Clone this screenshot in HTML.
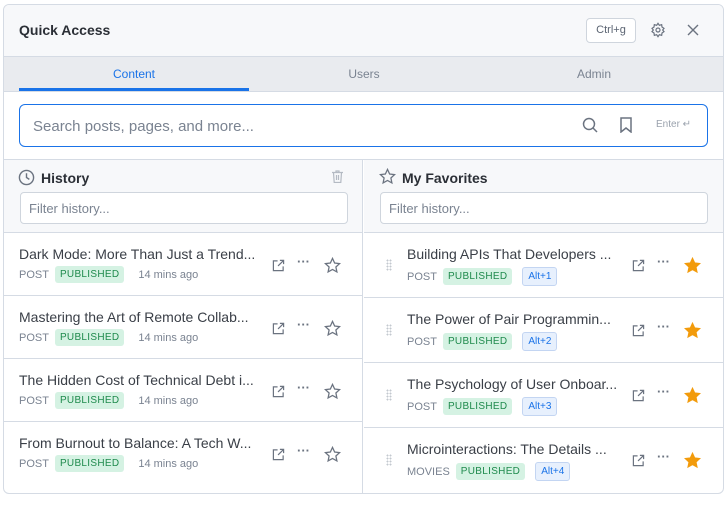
<!DOCTYPE html>
<html><head><style>
*{box-sizing:border-box;margin:0;padding:0}
body{width:726px;height:496px;background:#fff;font-family:"Liberation Sans",sans-serif;overflow:hidden;position:relative}
.panel{position:absolute;left:3px;top:4px;width:721px;height:490px;border:1px solid #d5dbe4;border-radius:6px;overflow:hidden;background:#fff}
.hdr{height:52px;background:#f7f8fa;border-bottom:1px solid #d5dbe4;position:relative}
.hdr .t{position:absolute;left:15px;top:17px;font-size:14px;font-weight:bold;color:#2b2f36}
.kbd{position:absolute;left:582px;top:13px;width:50px;height:25px;border:1px solid #cfd5dd;border-radius:4px;background:#fff;font-size:11px;color:#5b6472;text-align:center;line-height:23px}
.tabs{height:35px;background:#e9ebef;border-bottom:1px solid #d5dbe4;position:relative;font-size:12px}
.tab{position:absolute;top:10px;width:230px;text-align:center;color:#7a8391}
.ul{position:absolute;left:15px;top:31px;width:230px;height:3px;background:#1a73e8}
.sw{height:68px;border-bottom:1px solid #d5dbe4;position:relative}
.search{position:absolute;left:15px;top:12px;width:689px;height:43px;border:1px solid #1a73e8;border-radius:6px;font-size:15px;color:#7a8391;padding:13px 0 0 13px}
.col{position:absolute;top:155px;height:345px}
.ch{height:73px;background:#f7f8fa;border-bottom:1px solid #d5dbe4;position:relative}
.ch .h{position:absolute;left:37px;top:10px;font-size:14px;font-weight:bold;color:#2b2f36}
.filt{position:absolute;left:16px;top:32px;width:328px;height:32px;border:1px solid #cfd5dd;border-radius:4px;background:#fff;font-size:13px;color:#7a8391;padding:8px 0 0 8px}
.row{position:relative;border-bottom:1px solid #d5dbe4}
.ti{position:absolute;font-size:14px;color:#3a3f47;white-space:nowrap}
.meta{position:absolute;font-size:11px;color:#7a8391;display:flex;align-items:center;gap:6px}
.pub{background:#d5f2e3;color:#1e8a4c;font-size:10px;padding:3px 5px;border-radius:3px;letter-spacing:.3px}
.alt{background:#e7f0fd;border:1px solid #c3d5f2;color:#1a73e8;font-size:10px;padding:3px 5px;border-radius:3px;margin-left:4px}
.ic{position:absolute}
</style></head><body>
<div class="panel">
 <div class="hdr"><div class="t">Quick Access</div><div class="kbd">Ctrl+g</div>
  <svg class="ic" style="left:646px;top:17px" width="16" height="16" viewBox="0 0 24 24" fill="none" stroke="#6b7380" stroke-width="1.8"><circle cx="12" cy="12" r="3"/><path d="M12 2l2 3 3.5-1 .5 3.5 3 2-2 2.5 2 2.5-3 2-.5 3.5-3.5-1-2 3-2-3-3.5 1-.5-3.5-3-2 2-2.5-2-2.5 3-2L6.5 4 10 5z"/></svg>
  <svg class="ic" style="left:683px;top:19px" width="12" height="12" viewBox="0 0 12 12" stroke="#6b7380" stroke-width="1.4"><path d="M1 1l10 10M11 1L1 11"/></svg>
 </div>
 <div class="tabs"><div class="tab" style="left:15px;color:#1a73e8">Content</div><div class="tab" style="left:245px">Users</div><div class="tab" style="left:475px">Admin</div><div class="ul"></div></div>
 <div class="sw"><div class="search">Search posts, pages, and more...</div>
  <svg class="ic" style="left:578px;top:25px" width="16" height="16" viewBox="0 0 16 16" fill="none" stroke="#6b7380" stroke-width="1.5"><circle cx="7" cy="7" r="5.5"/><path d="M11 11l4 4"/></svg>
  <svg class="ic" style="left:616px;top:25px" width="12" height="16" viewBox="0 0 12 16" fill="none" stroke="#6b7380" stroke-width="1.5"><path d="M1 1h10v14l-5-4-5 4z"/></svg>
  <div style="position:absolute;left:652px;top:27px;font-size:10px;color:#9aa2ad">Enter ↵</div>
 </div>
</div>
<div class="col" style="left:4px;width:359px;top:160px;border-right:1px solid #d5dbe4;height:334px">
 <div class="ch">
  <svg class="ic" style="left:14px;top:9px" width="17" height="17" viewBox="0 0 18 18" fill="none" stroke="#6b7380" stroke-width="1.5"><circle cx="9" cy="9" r="7.5"/><path d="M9 4.5V9l3 2"/></svg>
  <div class="h">History</div>
  <svg class="ic" style="left:328px;top:10px" width="11" height="13" viewBox="0 0 11 13" fill="none" stroke="#b4bac3" stroke-width="1.2"><path d="M0 2.5h11M4 2.5V1h3v1.5M1.5 2.5l.7 10h6.6l.7-10M4.5 5v5M6.5 5v5"/></svg>
  <div class="filt">Filter history...</div>
 </div>
</div>
<div class="col" style="left:364px;width:359px;top:160px">
 <div class="ch">
  <svg class="ic" style="left:15px;top:8px" width="17" height="17" viewBox="0 0 24 24" fill="none" stroke="#6b7380" stroke-width="1.8"><path d="M12 2l3 6.5 7 .8-5.2 4.8 1.4 7L12 17.6 5.8 21.1l1.4-7L2 9.3l7-.8z"/></svg>
  <div class="h" style="left:38px">My Favorites</div>
  <div class="filt">Filter history...</div>
 </div>
</div>
<div id="L" style="position:absolute;left:4px;top:233px;width:359px"></div>
<div id="R" style="position:absolute;left:364px;top:233px;width:359px"></div>
<script>
var star='<path d="M12 2l3 6.5 7 .8-5.2 4.8 1.4 7L12 17.6 5.8 21.1l1.4-7L2 9.3l7-.8z"/>';
function icons(x,y,fav){return '<svg class="ic" style="left:'+x+'px;top:'+(y+2)+'px" width="13" height="13" viewBox="0 0 14 14" fill="none" stroke="#6b7380" stroke-width="1.3"><path d="M6 2H1.5v10.5H12V8M8.5 1.5h4v4M12.5 1.5L6.5 7.5"/></svg>'+
'<div style="position:absolute;left:'+(x+25)+'px;top:'+(y-3)+'px;font-size:13px;color:#6b7380;font-weight:bold">···</div>'+
'<svg class="ic" style="left:'+(x+52)+'px;top:'+y+'px" width="17" height="17" viewBox="0 0 24 24" fill="'+(fav?'#f29b0c':'none')+'" stroke="'+(fav?'#f29b0c':'#6b7380')+'" stroke-width="1.8">'+star+'</svg>';}
var L=["Dark Mode: More Than Just a Trend...","Mastering the Art of Remote Collab...","The Hidden Cost of Technical Debt i...","From Burnout to Balance: A Tech W..."],h='';
L.forEach(function(t,i){h+='<div class="row" style="height:63px'+(i==3?';border-bottom:none':'')+'"><div class="ti" style="left:15px;top:13px">'+t+'</div><div class="meta" style="left:15px;top:33px">POST <span class="pub">PUBLISHED</span><span style="margin-left:8px">14 mins ago</span></div>'+icons(268,24,0)+'</div>';});
document.getElementById('L').innerHTML=h;
var R=[["Building APIs That Developers ...","POST"],["The Power of Pair Programmin...","POST"],["The Psychology of User Onboar...","POST"],["Microinteractions: The Details ...","MOVIES"]];h='';
R.forEach(function(r,i){h+='<div class="row" style="height:65px'+(i==3?';border-bottom:none':'')+'"><div style="position:absolute;left:22px;top:26px;width:6px;height:12px;background:radial-gradient(circle,#c3c8cf 0.8px,transparent 1.1px) 0 0/3px 3px"></div><div class="ti" style="left:43px;top:13px">'+r[0]+'</div><div class="meta" style="left:43px;top:34px">'+r[1]+' <span class="pub">PUBLISHED</span><span class="alt">Alt+'+(i+1)+'</span></div>'+icons(268,24,1)+'</div>';});
document.getElementById('R').innerHTML=h;
</script>
</body></html>
